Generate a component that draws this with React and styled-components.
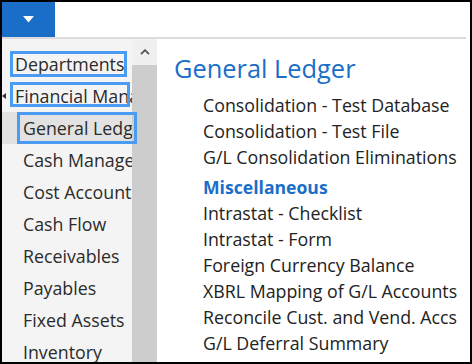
import React from "react";
import styled, { createGlobalStyle } from "styled-components";

const Global = createGlobalStyle`
  html, body { margin: 0; padding: 0; background: #fff; }
  body { font-family: "Open Sans", "Noto Sans", sans-serif; }
`;

const Frame = styled.div`
  width: 472px;
  height: 364px;
  box-sizing: border-box;
  border: 2px solid #000;
  display: flex;
  flex-direction: column;
  overflow: hidden;
  background: #fff;
`;

const TopBar = styled.div`
  height: 35px;
  flex: none;
  display: flex;
  border-bottom: 2px solid #dcdcdc;
  margin-right: 4px;
`;

const MenuButton = styled.div`
  width: 53px;
  background: #1a6ec8;
  display: flex;
  align-items: center;
  justify-content: center;
`;

const Body = styled.div`
  flex: 1;
  display: flex;
  min-height: 0;
`;

const Nav = styled.div`
  width: 130px;
  flex: none;
  background: #f4f4f4;
  padding-top: 9px;
  position: relative;
  overflow: visible;
`;

const NavRow = styled.div`
  height: 32px;
  display: flex;
  align-items: center;
  padding-left: ${(p) => (p.$level ? 21 : 13)}px;
  background: ${(p) => (p.$selected ? "#e2e2e2" : "transparent")};
  font-size: 17.8px;
  color: #2b2b2b;
  white-space: nowrap;
  position: relative;
  overflow: visible;
`;

const Clip = styled.div`
  width: 100%;
  overflow: hidden;
`;

const Highlight = styled.div`
  position: absolute;
  top: ${(p) => p.$top}px;
  left: ${(p) => p.$left}px;
  width: ${(p) => p.$w}px;
  height: ${(p) => p.$h}px;
  box-sizing: border-box;
  border: 3px solid #4a9cf2;
  pointer-events: none;
  z-index: 2;
`;

const Expander = styled.div`
  position: absolute;
  left: 0;
  top: 13px;
  width: 0;
  height: 0;
  border-top: 3px solid transparent;
  border-bottom: 3px solid transparent;
  border-right: 4px solid #333;
`;

const Scrollbar = styled.div`
  width: 25px;
  flex: none;
  display: flex;
  flex-direction: column;
  background: #cdcdcd;
`;

const ScrollUp = styled.div`
  height: 26px;
  background: #f0f0f0;
  display: flex;
  align-items: center;
  justify-content: center;
`;

const Content = styled.div`
  flex: 1;
  padding: 12px 0 0 17px;
  background: #fff;
`;

const Title = styled.h1`
  margin: 0 0 7px;
  font-weight: 400;
  font-size: 25.4px;
  line-height: 34px;
  color: #1a6ec8;
`;

const List = styled.div`
  padding-left: 29px;
  display: flex;
  flex-direction: column;
`;

const Item = styled.div`
  font-size: 17.8px;
  line-height: 26px;
  color: #222;
  white-space: nowrap;
`;

const Section = styled.div`
  font-size: 17.6px;
  line-height: 26px;
  font-weight: 700;
  color: #1a6ec8;
  margin-top: 4px;
`;

const navItems = [
  { label: "Departments", level: 0 },
  { label: "Financial Management", level: 0, expander: true },
  { label: "General Ledger", level: 1, selected: true },
  { label: "Cash Management", level: 1 },
  { label: "Cost Accounting", level: 1 },
  { label: "Cash Flow", level: 1 },
  { label: "Receivables", level: 1 },
  { label: "Payables", level: 1 },
  { label: "Fixed Assets", level: 1 },
  { label: "Inventory", level: 1 },
];

export default function App() {
  return (
    <>
      <Global />
      <Frame>
        <TopBar>
          <MenuButton>
            <svg width="11" height="7" viewBox="0 0 11 7">
              <path d="M0 0 H11 L5.5 6.5 Z" fill="#fff" />
            </svg>
          </MenuButton>
        </TopBar>
        <Body>
          <Nav>
            {navItems.map((it) => (
              <NavRow key={it.label} $level={it.level} $selected={it.selected}>
                {it.expander && <Expander />}
                <Clip>{it.label}</Clip>
              </NavRow>
            ))}
            <Highlight $top={12} $left={8} $w={117} $h={26} />
            <Highlight $top={43} $left={8} $w={120} $h={25} />
            <Highlight $top={73} $left={15} $w={120} $h={32} />
          </Nav>
          <Scrollbar>
            <ScrollUp>
              <svg width="10" height="6" viewBox="0 0 10 6">
                <path d="M1 5.2 L5 1.2 L9 5.2" fill="none" stroke="#555" strokeWidth="1.8" />
              </svg>
            </ScrollUp>
          </Scrollbar>
          <Content>
            <Title>General Ledger</Title>
            <List>
              <Item>Consolidation - Test Database</Item>
              <Item>Consolidation - Test File</Item>
              <Item>G/L Consolidation Eliminations</Item>
              <Section>Miscellaneous</Section>
              <Item>Intrastat - Checklist</Item>
              <Item>Intrastat - Form</Item>
              <Item>Foreign Currency Balance</Item>
              <Item>XBRL Mapping of G/L Accounts</Item>
              <Item>Reconcile Cust. and Vend. Accs</Item>
              <Item>G/L Deferral Summary</Item>
            </List>
          </Content>
        </Body>
      </Frame>
    </>
  );
}
